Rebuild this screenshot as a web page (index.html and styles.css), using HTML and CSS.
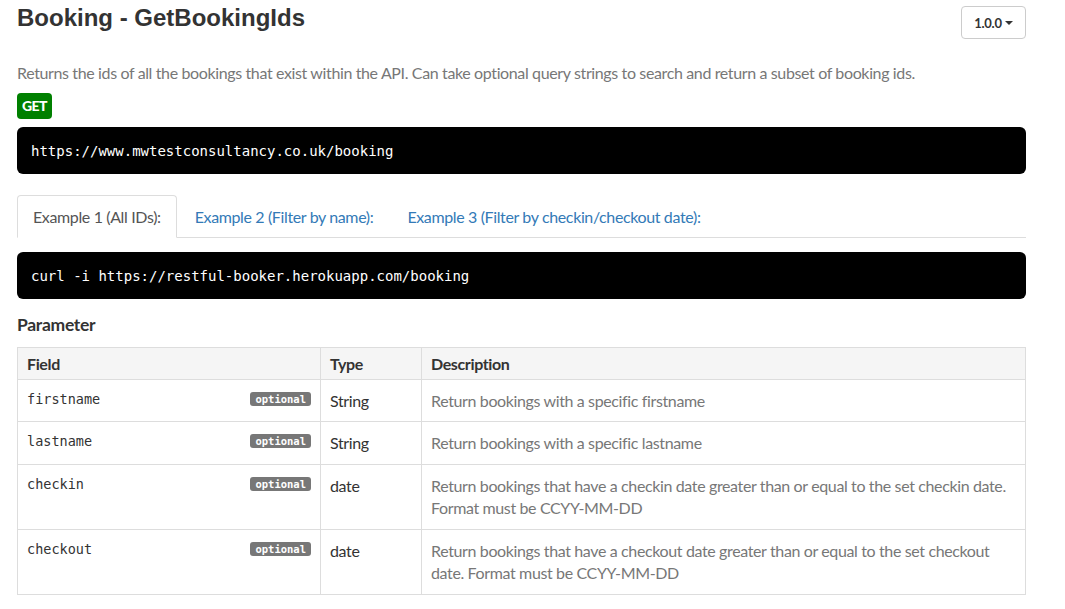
FILE: index.html
```html
<!DOCTYPE html>
<html>
<head>
<meta charset="utf-8">
<link rel="stylesheet" href="styles.css">
</head>
<body>
<div class="page">
  <div class="header">
    <h1 class="title">Booking - GetBookingIds</h1>
    <button class="version">1.0.0 <span class="caret"></span></button>
  </div>
  <p class="desc">Returns the ids of all the bookings that exist within the API. Can take optional query strings to search and return a subset of booking ids.</p>
  <span class="method">GET</span>
  <pre class="code">https://www.mwtestconsultancy.co.uk/booking</pre>
  <ul class="tabs">
    <li class="tab active">Example 1 (All IDs):</li>
    <li class="tab">Example 2 (Filter by name):</li>
    <li class="tab">Example 3 (Filter by checkin/checkout date):</li>
  </ul>
  <pre class="code">curl -i https://restful-booker.herokuapp.com/booking</pre>
  <h2 class="section">Parameter</h2>
  <table class="params">
    <thead>
      <tr><th class="c-field">Field</th><th class="c-type">Type</th><th class="c-desc">Description</th></tr>
    </thead>
    <tbody>
      <tr><td class="c-field"><div class="field"><span class="fname">firstname</span><span class="label">optional</span></div></td><td class="c-type">String</td><td class="c-desc">Return bookings with a specific firstname</td></tr>
      <tr><td class="c-field"><div class="field"><span class="fname">lastname</span><span class="label">optional</span></div></td><td class="c-type">String</td><td class="c-desc">Return bookings with a specific lastname</td></tr>
      <tr><td class="c-field"><div class="field"><span class="fname">checkin</span><span class="label">optional</span></div></td><td class="c-type">date</td><td class="c-desc">Return bookings that have a checkin date greater than or equal to the set checkin date. Format must be CCYY-MM-DD</td></tr>
      <tr><td class="c-field"><div class="field"><span class="fname">checkout</span><span class="label">optional</span></div></td><td class="c-type">date</td><td class="c-desc">Return bookings that have a checkout date greater than or equal to the set checkout date. Format must be CCYY-MM-DD</td></tr>
    </tbody>
  </table>
</div>
</body>
</html>
```
FILE: styles.css
```css
* { box-sizing: border-box; }
body {
  margin: 0;
  background: #fff;
  font-family: Lato, "Open Sans", sans-serif;
  font-size: 16px;
  letter-spacing: -0.37px;
  color: #333;
}
.page {
  width: 1009px;
  margin-left: 17px;
}
.header {
  display: flex;
  justify-content: space-between;
  align-items: flex-start;
  padding-top: 6px;
}
.title {
  margin: 0;
  font-family: "Liberation Sans", Arial, sans-serif;
  font-weight: bold;
  font-size: 24px;
  line-height: 24px;
  letter-spacing: 0;
  color: #333;
}
.version {
  height: 33px;
  width: 65px;
  padding: 0;
  border: 1px solid #ccc;
  border-radius: 4px;
  background: #fff;
  font-family: Lato, sans-serif;
  font-weight: bold;
  font-size: 13px;
  letter-spacing: -0.3px;
  color: #333;
  display: flex;
  align-items: center;
  justify-content: center;
  gap: 3px;
}
.caret {
  width: 0; height: 0;
  border-left: 4px solid transparent;
  border-right: 4px solid transparent;
  border-top: 4px solid #333;
}
.desc {
  margin: 24px 0 10px;
  color: #777;
  font-size: 16px;
  line-height: 20px;
}
.method {
  display: inline-block;
  background: #008000;
  color: #fff;
  font-weight: 900;
  font-size: 14px;
  letter-spacing: -0.6px;
  line-height: 26px;
  height: 26px;
  padding: 0 5px;
  border-radius: 4px;
  vertical-align: top;
}
.code {
  margin: 7px 0 0;
  background: #000;
  color: #fff;
  border-radius: 6px;
  font-family: "DejaVu Sans Mono", monospace;
  font-size: 14px;
  letter-spacing: 0;
  line-height: 20px;
  padding: 14px 14px 13px;
}
.method + .code { margin-top: 8px; }
.tabs {
  list-style: none;
  margin: 21px 0 0;
  padding: 0;
  display: flex;
  border-bottom: 1px solid #ddd;
}
.tab {
  padding: 11px 15px 10px;
  line-height: 20px;
  color: #337ab7;
  border: 1px solid transparent;
  border-radius: 4px 4px 0 0;
  margin-bottom: -1px;
  margin-right: 2px;
}
.tab.active {
  color: #555;
  border-color: #ddd;
  border-bottom-color: #fff;
  background: #fff;
}
.tabs + .code { margin-top: 14px; }
.section {
  margin: 16px 0 12px;
  font-size: 17.5px;
  font-weight: 700;
  line-height: 20px;
  letter-spacing: -0.3px;
  color: #333;
}
.params {
  width: 1009px;
  border-collapse: collapse;
  border: 1px solid #ddd;
}
.params th, .params td {
  border: 1px solid #ddd;
  text-align: left;
  vertical-align: top;
  padding: 10px 9px 9px;
  line-height: 22.5px;
}
.params th {
  background: #f5f5f5;
  font-weight: 700;
  padding: 5px 9px 3px;
}
.c-field { width: 303px; }
.c-type { width: 101px; }
.c-desc { color: #777; }
.params th.c-desc { color: #333; }
.params td.c-type { color: #333; }
.field {
  display: flex;
  justify-content: space-between;
  align-items: center;
}
.fname {
  font-family: "DejaVu Sans Mono", monospace;
  font-size: 13.5px;
  letter-spacing: 0;
  color: #333;
  line-height: 18px;
}
.label {
  background: #777;
  color: #fff;
  font-family: "DejaVu Sans Mono", monospace;
  font-weight: bold;
  font-size: 10.5px;
  letter-spacing: 0;
  line-height: 14px;
  padding: 0 5px;
  border-radius: 3px;
}
```
